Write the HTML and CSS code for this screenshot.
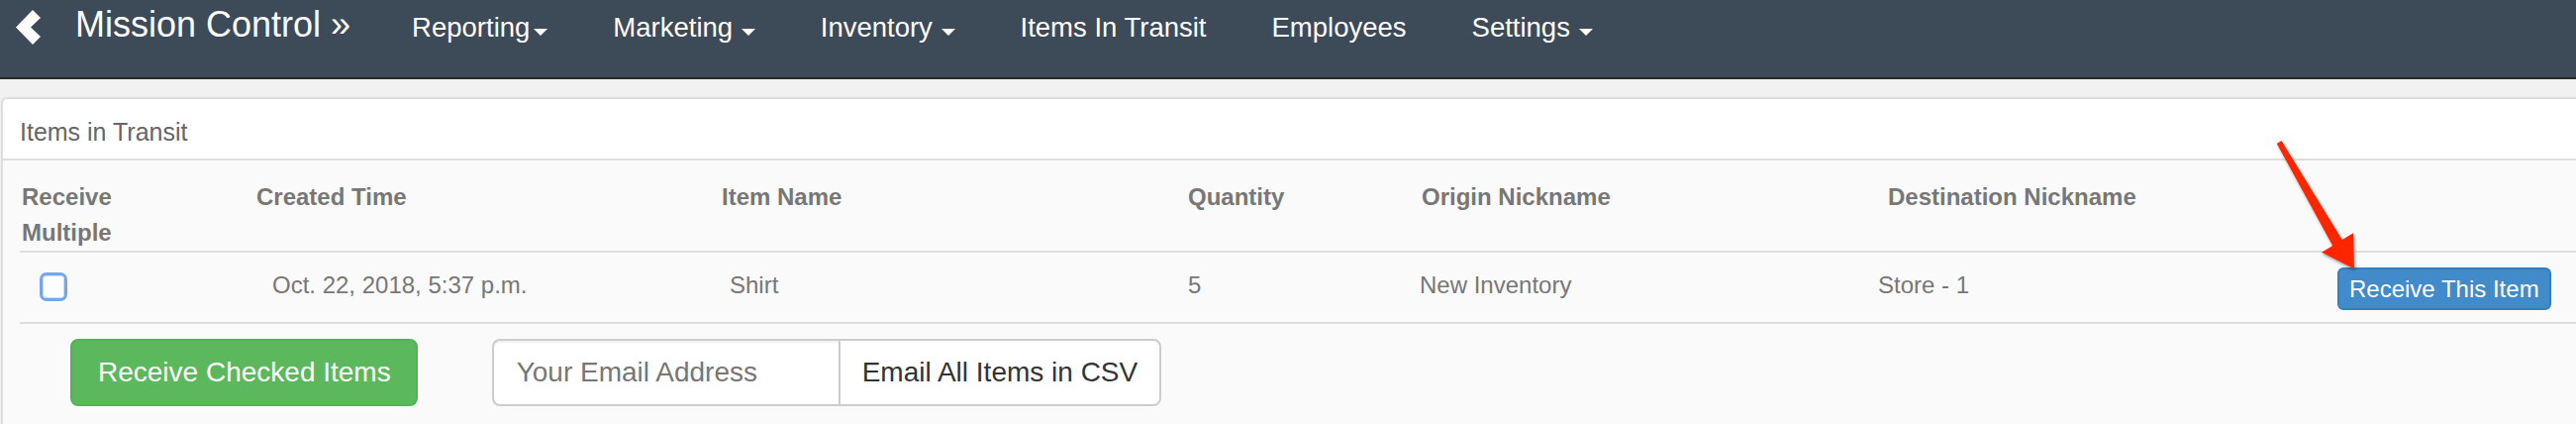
FILE: index.html
```html
<!DOCTYPE html>
<html lang="en">
<head>
<meta charset="utf-8">
<title>Items in Transit</title>
<link rel="stylesheet" href="styles.css">
</head>
<body>
<nav class="navbar">
  <a class="back" href="#" aria-label="Back">
    <svg width="26" height="36" viewBox="0 0 26 36"><polygon points="17,0 25,8 15,17.5 25,27 17,35 0,17.5" fill="#ffffff"/></svg>
  </a>
  <a class="brand" href="#">Mission Control »</a>
  <ul class="nav-links">
    <li><a href="#">Reporting<span class="caret tight"></span></a></li>
    <li><a href="#">Marketing <span class="caret"></span></a></li>
    <li><a href="#">Inventory <span class="caret"></span></a></li>
    <li><a href="#">Items In Transit</a></li>
    <li><a href="#">Employees</a></li>
    <li><a href="#">Settings <span class="caret"></span></a></li>
  </ul>
</nav>

<main class="page">
  <section class="panel">
    <div class="panel-heading">Items in Transit</div>
    <div class="panel-body">
      <div class="grid">
        <div class="th">Receive<br>Multiple</div>
        <div class="th">Created Time</div>
        <div class="th">Item Name</div>
        <div class="th">Quantity</div>
        <div class="th">Origin Nickname</div>
        <div class="th">Destination Nickname</div>
        <div class="th"></div>

        <div class="td"><span class="checkbox"></span></div>
        <div class="td td-date">Oct. 22, 2018, 5:37 p.m.</div>
        <div class="td td-name">Shirt</div>
        <div class="td td-qty">5</div>
        <div class="td">New Inventory</div>
        <div class="td td-dest">Store - 1</div>
        <div class="td td-action"><button class="btn btn-primary">Receive This Item</button></div>
      </div>

      <div class="actions">
        <button class="btn btn-success">Receive Checked Items</button>
        <div class="input-group">
          <input class="email" type="text" placeholder="Your Email Address">
          <button class="btn btn-default">Email All Items in CSV</button>
        </div>
      </div>
    </div>
  </section>
</main>

<svg class="annotation" width="2602" height="428" viewBox="0 0 2602 428">
  <defs>
    <filter id="shadow" x="-20%" y="-20%" width="140%" height="140%">
      <feDropShadow dx="1" dy="2" stdDeviation="1.5" flood-color="#000" flood-opacity="0.35"/>
    </filter>
  </defs>
  <polygon filter="url(#shadow)" fill="#fd2500" points="2299.8,145 2356.2,248 2345,254.8 2378,271.5 2377,235.2 2365.8,242 2304.5,142"/>
</svg>
</body>
</html>
```
FILE: styles.css
```css
html, body {
  margin: 0;
  padding: 0;
  overflow: hidden;
}

body {
  background: #f1f1f1;
  font-family: "Liberation Sans", Arial, Helvetica, sans-serif;
  color: #777777;
  position: relative;
}

a {
  text-decoration: none;
  color: inherit;
}

/* ---------- Navbar ---------- */
.navbar {
  height: 78px;
  background: #3d4a58;
  border-bottom: 2px solid #2a2a2a;
  display: flex;
  align-items: flex-start;
  padding-left: 16px;
}

.back {
  margin-top: 10px;
  display: block;
  width: 26px;
  height: 36px;
}

.back svg {
  display: block;
}

.brand {
  color: #ffffff;
  font-size: 36px;
  line-height: 36px;
  margin-left: 34px;
  margin-top: 7px;
  white-space: nowrap;
}

.nav-links {
  list-style: none;
  margin: 14px 0 0 62px;
  padding: 0;
  display: flex;
  gap: 66px;
}

.nav-links a {
  color: #ffffff;
  font-size: 27.5px;
  line-height: 28px;
  white-space: nowrap;
}

.caret {
  display: inline-block;
  width: 0;
  height: 0;
  border-top: 7px solid #ffffff;
  border-left: 7px solid transparent;
  border-right: 7px solid transparent;
  vertical-align: 1px;
  margin-left: 1px;
}

.caret.tight {
  margin-left: 4px;
}

/* ---------- Panel ---------- */
.page {
  padding-top: 18px;
}

.panel {
  margin-left: 1px;
  margin-right: -30px;
  border: 2px solid #dddddd;
  border-radius: 6px 0 0 0;
  background: #fafafa;
}

.panel-heading {
  height: 62px;
  box-sizing: border-box;
  padding: 4px 0 0 17px;
  line-height: 58px;
  font-size: 25px;
  color: #666666;
  background: #ffffff;
  border-bottom: 2px solid #dddddd;
  border-radius: 6px 0 0 0;
}

.panel-body {
  padding: 0 0 20px 17px;
}

/* ---------- Table ---------- */
.grid {
  display: grid;
  grid-template-columns: 237px 470px 471px 236px 471px 456px 1fr;
}

.th {
  height: 93px;
  box-sizing: border-box;
  padding: 19px 0 0 2px;
  border-bottom: 2px solid #dddddd;
  font-weight: bold;
  font-size: 24px;
  line-height: 36px;
  color: #777777;
  white-space: nowrap;
}

.td {
  height: 72px;
  box-sizing: border-box;
  padding-top: 21px;
  border-bottom: 2px solid #dddddd;
  font-size: 24px;
  line-height: 24px;
  color: #777777;
  white-space: nowrap;
}

.td-date { padding-left: 18px; }
.td-name { padding-left: 10px; }
.td-qty { padding-left: 2px; }
.td-dest { margin-left: -8px; }

.td-action {
  padding-top: 15px;
}

.td:first-child,
.td .checkbox {
  margin-top: -1px;
}

.checkbox {
  display: block;
  width: 28px;
  height: 29px;
  box-sizing: border-box;
  margin-left: 20px;
  border: 3px solid #74a6ec;
  border-radius: 7px;
  background: #fdfdfd;
  box-shadow: inset 0 0 0 1px #d3ddec;
}

/* ---------- Buttons ---------- */
.btn {
  font-family: "Liberation Sans", Arial, Helvetica, sans-serif;
  cursor: pointer;
  margin: 0;
}

.btn-primary {
  height: 43px;
  padding: 0 10px;
  font-size: 24px;
  color: #ffffff;
  background: #428bca;
  border: 2px solid #357ebd;
  border-radius: 6px;
}

.actions {
  display: flex;
  align-items: flex-start;
  gap: 75px;
  padding: 15px 0 0 51px;
}

.btn-success {
  height: 68px;
  padding: 0 25px 0 26px;
  font-size: 28px;
  color: #ffffff;
  background: #5cb85c;
  border: 2px solid #53b253;
  border-radius: 8px;
}

.input-group {
  display: flex;
}

.email {
  width: 350px;
  height: 68px;
  box-sizing: border-box;
  padding: 0 0 0 23px;
  font-family: "Liberation Sans", Arial, Helvetica, sans-serif;
  font-size: 28px;
  color: #555555;
  background: #ffffff;
  border: 2px solid #cccccc;
  border-right: 0;
  border-radius: 8px 0 0 8px;
  box-shadow: inset 0 2px 2px rgba(0, 0, 0, 0.06);
  outline: none;
}

.email::placeholder {
  color: #777777;
}

.btn-default {
  height: 68px;
  padding: 0 22px;
  font-size: 28px;
  color: #333333;
  background: #ffffff;
  border: 2px solid #cccccc;
  border-radius: 0 8px 8px 0;
}

/* ---------- Annotation overlay ---------- */
.annotation {
  position: absolute;
  top: 0;
  left: 0;
  pointer-events: none;
}
```
